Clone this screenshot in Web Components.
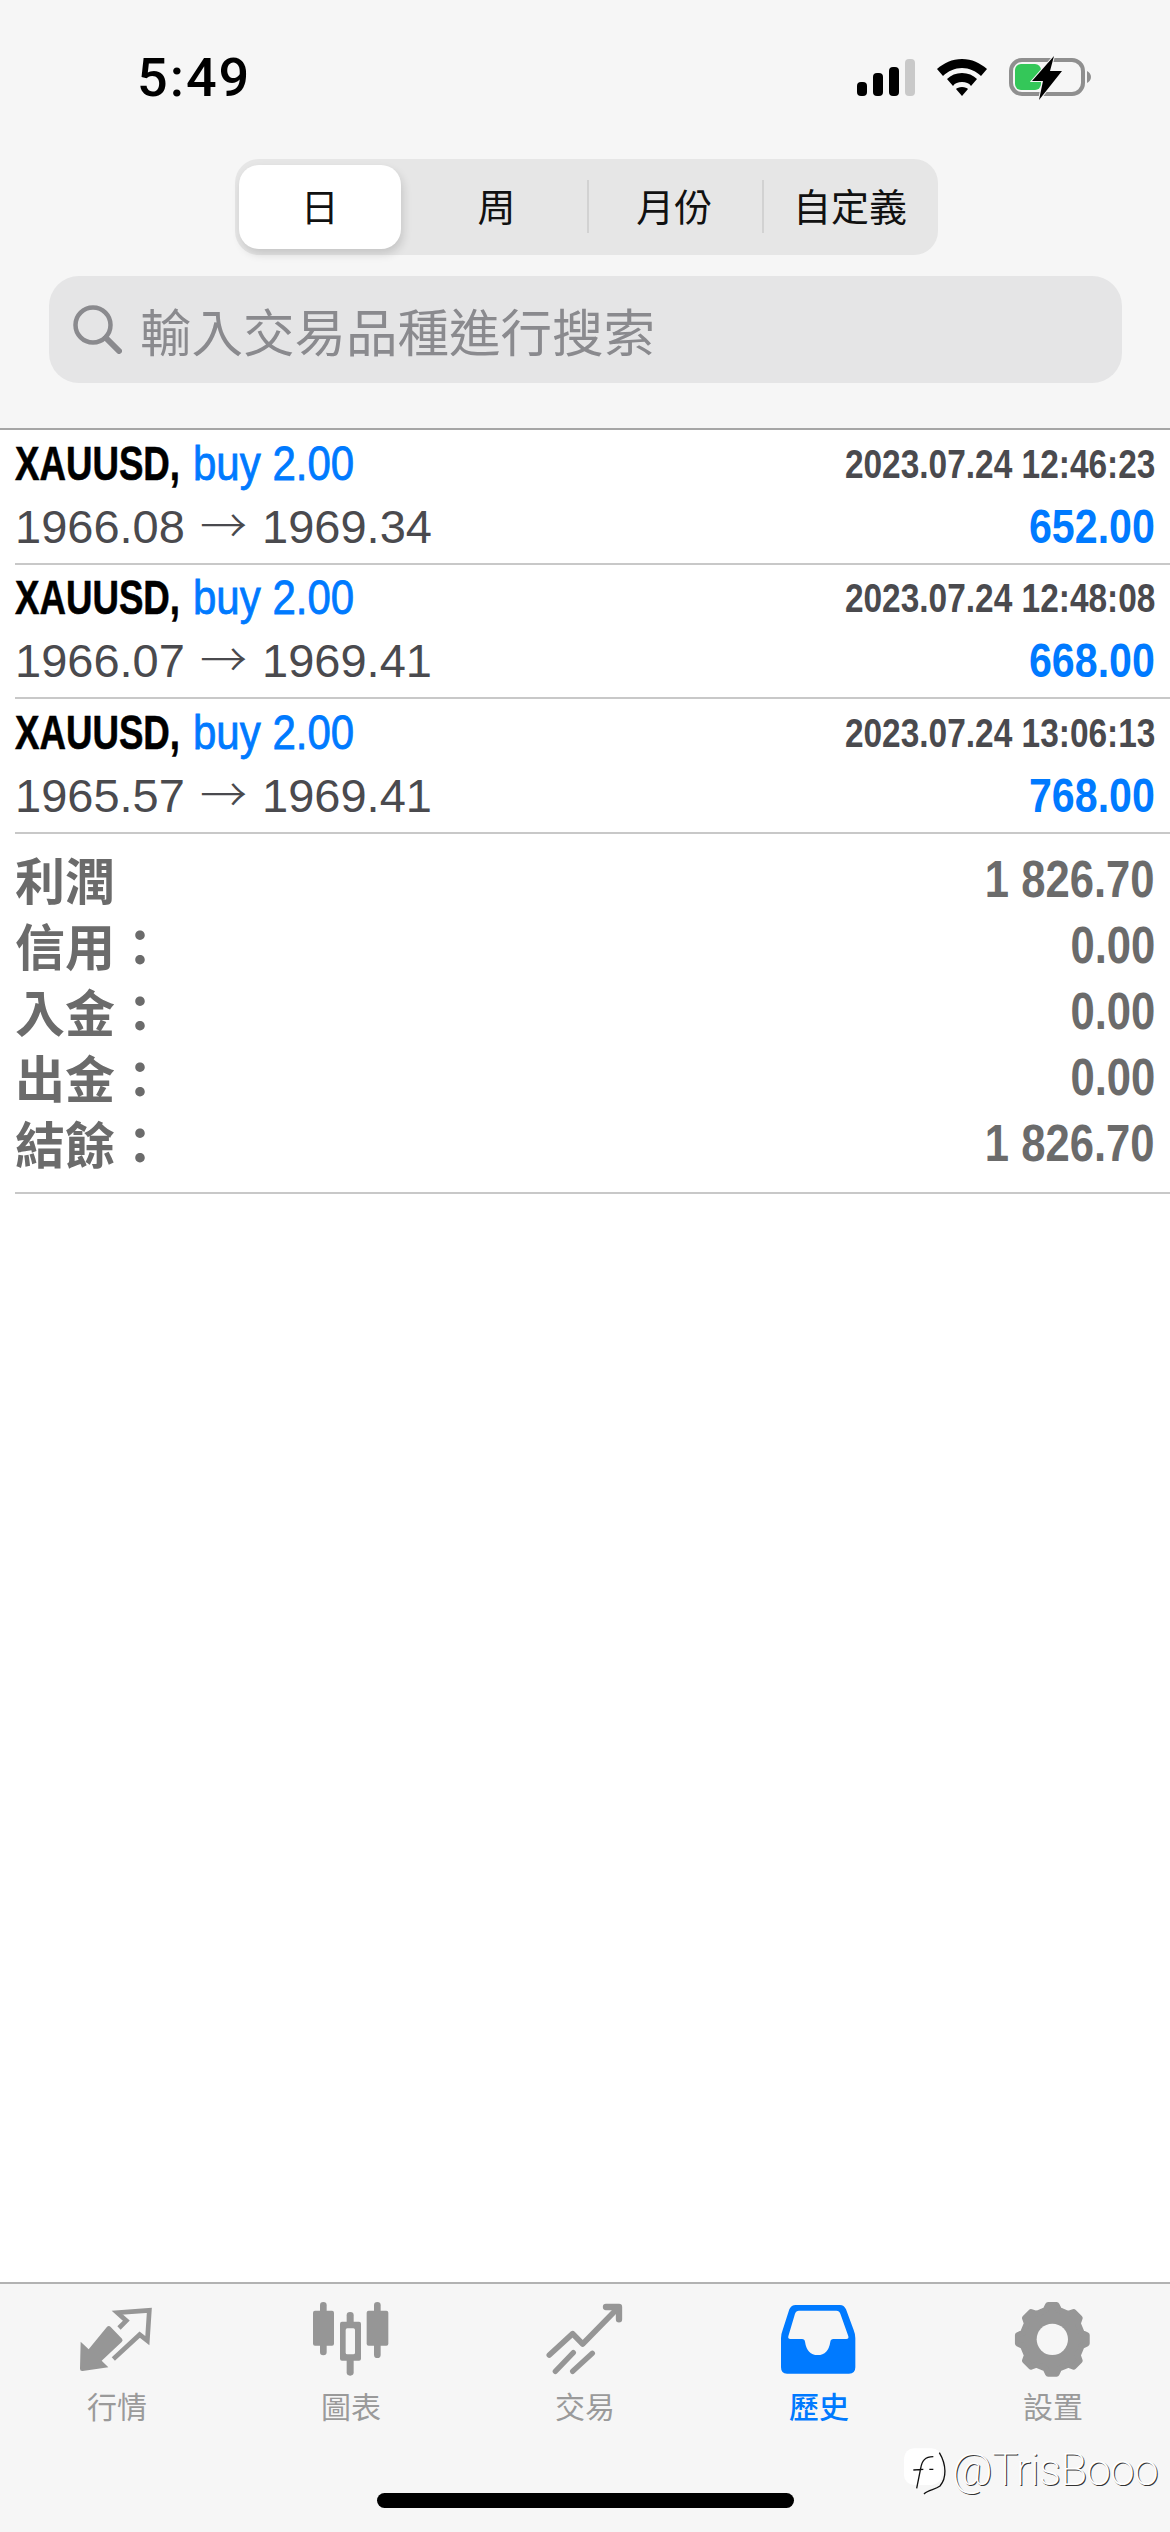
<!DOCTYPE html>
<html lang="zh-Hant">
<head>
<meta charset="utf-8">
<title>歷史</title>
<style>
html, body { margin: 0; padding: 0; background: #fff; }
body { width: 1170px; height: 2532px; font-family: "Liberation Sans", "Noto Sans CJK TC", sans-serif; }
mt-screen { height: 2532px; }
</style>
</head>
<body>
<mt-screen>
  <mt-header slot="top"></mt-header>
  <mt-deal symbol="XAUUSD," lots="buy 2.00" time="2023.07.24 12:46:23" open="1966.08" close="1969.34" profit="652.00"></mt-deal>
  <mt-deal symbol="XAUUSD," lots="buy 2.00" time="2023.07.24 12:48:08" open="1966.07" close="1969.41" profit="668.00"></mt-deal>
  <mt-deal symbol="XAUUSD," lots="buy 2.00" time="2023.07.24 13:06:13" open="1965.57" close="1969.41" profit="768.00"></mt-deal>
  <mt-summary>
    <mt-sumrow label="利潤" value="1 826.70"></mt-sumrow>
    <mt-sumrow label="信用：" value="0.00"></mt-sumrow>
    <mt-sumrow label="入金：" value="0.00"></mt-sumrow>
    <mt-sumrow label="出金：" value="0.00"></mt-sumrow>
    <mt-sumrow label="結餘：" value="1 826.70"></mt-sumrow>
  </mt-summary>
  <mt-tabbar slot="bottom"></mt-tabbar>
</mt-screen>
<script>
(function() {
	const SANS = '"Liberation Sans", "Noto Sans CJK TC", sans-serif';

	// small helper, every element here has a fixed shadow template
	function base(html) {
		return class extends HTMLElement {
			constructor() {
				super();
				this.attachShadow({mode: 'open'}).innerHTML = html;
			}
		};
	}

	customElements.define('mt-screen', base(`<style>
		:host { display: flex; flex-direction: column; width: 1170px; position: relative; }
		main { flex: 1; }
	</style><slot name="top"></slot><main><slot></slot></main><slot name="bottom"></slot>`));

	customElements.define('mt-header', base(`<style>
		:host { display: block; height: 430px; background: #f6f6f6; border-bottom: 2px solid #a6a6a6; box-sizing: border-box; font-family: ${SANS}; }
		.status { display: flex; justify-content: space-between; height: 159px; padding: 0 78px 0 137px; }
		.clock { font: 500 54px Roboto, sans-serif; letter-spacing: 2px; color: #000; line-height: 38px; margin-top: 59px; }
		.status svg { display: block; margin-top: 56px; }
		.seg { display: grid; grid-template-columns: repeat(4, 175.750px); width: 703px; height: 96px; margin: 0 0 0 235px; background: #e6e6e6; border-radius: 24px; }
		.seg div { position: relative; display: flex; align-items: center; justify-content: center; font-size: 38px; color: #111; padding-bottom: 5px; box-sizing: border-box; }
		.seg .on { background: #fff; border-radius: 20px; margin: 6px 10px 6px 4px; box-shadow: 2px 5px 10px rgba(0,0,0,.14); }
		.seg .wk { padding-right: 4px; }
		.seg .sep::before { content: ""; position: absolute; left: 0; top: 21px; height: 53px; width: 2px; background: #d2d2d2; }
		.search { display: flex; align-items: center; gap: 18px; height: 107px; margin: 21px 48px 0 49px; padding-left: 23px; background: #e5e5e6; border-radius: 30px; font-size: 51.500px; color: #8a8a8e; box-sizing: border-box; }
	</style>
	<div class="status">
		<div class="clock">5:49</div>
		<svg width="235" height="44" viewBox="0 0 235 44">
			<g fill="#000"><rect x="0" y="26" width="10" height="14" rx="4"/><rect x="16" y="17" width="10" height="23" rx="4"/><rect x="32" y="11" width="10" height="29" rx="4"/></g>
			<rect x="48" y="3" width="10" height="37" rx="4" fill="#c9c9c9"/>
			<g transform="translate(80,3)" fill="#000">
				<path d="M25 0C15 0 7 4 0 10l6 7c5-5 12-8 19-8s14 3 19 8l6-7C43 4 35 0 25 0z"/>
				<path d="M25 14c-6 0-11 2-15 6l6 7c2-3 5-4 9-4s7 1 9 4l6-7c-4-4-9-6-15-6z"/>
				<path d="M25 28c-3 0-5 1-6 2l6 7 6-7c-1-1-3-2-6-2z"/>
			</g>
			<rect x="154" y="4" width="72" height="34" rx="11" fill="none" stroke="#8f8f8f" stroke-width="4"/>
			<path d="M230 15c2 1 4 3 4 6s-2 5-4 6z" fill="#8f8f8f"/>
			<rect x="158" y="8" width="26" height="26" rx="6" fill="#34c759"/>
			<path d="M197 0 175 25H186L182 44 205 15H193z" fill="#000" stroke="#f6f6f6" stroke-width="2" paint-order="stroke"/>
		</svg>
	</div>
	<div class="seg">
		<div class="on">日</div><div class="wk">周</div><div class="sep">月份</div><div class="sep">自定義</div>
	</div>
	<div class="search">
		<svg width="50" height="50" viewBox="0 0 50 50" style="margin-top:-2px"><circle cx="21" cy="21" r="17.500" fill="none" stroke="#8a8a8e" stroke-width="4.500"/><path d="M34 34 47 47" stroke="#8a8a8e" stroke-width="6" stroke-linecap="round"/></svg>
		<span>輸入交易品種進行搜索</span>
	</div>`));

	customElements.define('mt-deal', class extends HTMLElement {
		connectedCallback() {
			if (this.shadowRoot) return;
			const a = n => this.getAttribute(n);
			this.attachShadow({mode: 'open'}).innerHTML = `<style>
			:host { display: block; height: 134.500px; box-sizing: border-box; padding-left: 15px; font-family: ${SANS}; }
			.in { height: 100%; box-sizing: border-box; border-bottom: 2px solid #c8c8c8; padding: 2px 15px 0 0; display: grid; grid-template-rows: 63px 62px; align-content: start; }
			.r { display: flex; justify-content: space-between; align-items: center; white-space: nowrap; line-height: 1; }
			.sym, .lot, .tm, .pf { display: inline-block; }
			.sym { font-weight: 700; font-size: 48px; color: #000; transform: scaleX(.764); transform-origin: left; -webkit-text-stroke: .6px #000; }
			.lot { font-size: 48px; color: #007aff; margin-left: -38px; transform: scaleX(.875); transform-origin: left; -webkit-text-stroke: .8px #007aff; }
			.tm { font-weight: 700; font-size: 40px; color: #4a4a4e; transform: scaleX(.836); transform-origin: right; }
			.px { font-size: 47px; color: #4a4a4e; }
			.ar { font-family: "Noto Sans CJK TC", sans-serif; font-weight: 300; margin: 0 2px; line-height: 0; }
			.pf { font-weight: 700; font-size: 49px; color: #007aff; transform: scaleX(.84); transform-origin: right; }
			</style>
			<div class="in">
				<div class="r"><span><span class="sym">${a('symbol')}</span><span class="lot">${a('lots')}</span></span><span class="tm">${a('time')}</span></div>
				<div class="r"><span class="px">${a('open')} <span class="ar">→</span> ${a('close')}</span><span class="pf">${a('profit')}</span></div>
			</div>`;
		}
	});

	customElements.define('mt-summary', base(`<style>
		:host { display: block; margin-left: 15px; height: 360px; box-sizing: border-box; border-bottom: 2px solid #c8c8c8; padding: 16px 15px 0 0; }
	</style><slot></slot>`));

	customElements.define('mt-sumrow', class extends HTMLElement {
		connectedCallback() {
			if (this.shadowRoot) return;
			this.attachShadow({mode: 'open'}).innerHTML = `<style>
			:host { display: flex; justify-content: space-between; align-items: center; height: 66px; color: #6b6b6b; font-family: ${SANS}; font-weight: 700; }
			.l { font-size: 50px; margin-bottom: 10px; }
			.v { display: inline-block; font-size: 51px; margin-bottom: 6px; transform: scaleX(.855); transform-origin: right; }
			</style><span class="l">${this.getAttribute('label')}</span><span class="v">${this.getAttribute('value')}</span>`;
		}
	});

	// gear teeth are easier to compute than to type out
	function gearPoints(cx, cy) {
		const pts = [];
		for (let i = 0; i < 8; i++) {
			const c = i * Math.PI / 4 - Math.PI / 2;
			[[90, -13], [104, -7], [104, 7], [90, 13]].forEach(([r, d]) => {
				const t = c + d * Math.PI / 180;
				pts.push((cx + r * Math.cos(t)).toFixed(1) + ',' + (cy + r * Math.sin(t)).toFixed(1));
			});
		}
		return pts.join(' ');
	}

	// all drawn on the 110x100 crop grid, at 3 units per px
	const GREY = '#969696';
	const ICONS = {
		quotes: `<svg width="110" height="100" viewBox="6 0 330 300">
			<path fill="${GREY}" d="M62 155 86 178 140 112Q146 105 152 111L186 146Q190 151 185 156L125 212 145 232 68 243Q60 244 60 236z"/>
			<path fill="none" stroke="${GREY}" stroke-width="14" stroke-miterlimit="6" d="M177 114 199 92 172 68 268 61 262 152 239 134 160 207"/>
		</svg>`,
		chart: `<svg width="110" height="100" viewBox="-12 0 330 300" fill="${GREY}">
			<rect x="60" y="36" width="20" height="160" rx="10"/><rect x="39" y="62" width="63" height="105" rx="6"/>
			<rect x="140" y="66" width="21" height="191" rx="10"/><rect x="120" y="95" width="63" height="117" rx="6"/>
			<rect x="137" y="115" width="28" height="78" rx="5" fill="#f6f6f6"/>
			<rect x="222" y="36" width="20" height="168" rx="10"/><rect x="200" y="62" width="65" height="105" rx="6"/>
		</svg>`,
		trade: `<svg width="110" height="100" viewBox="0 0 330 300" fill="none" stroke="${GREY}" stroke-linecap="round" stroke-linejoin="round">
			<path stroke-width="17" d="M58 195 128 131 158 162 260 58"/>
			<path stroke-width="19" d="M228 51H267V88"/>
			<path stroke-width="16" d="M76 244 130 188M128 244 187 190"/>
		</svg>`,
		history: `<svg width="110" height="100" viewBox="-3 0 330 300">
			<path fill="#007aff" d="M92 45H225Q237 45 243 58L266 120Q271 132 271 145V232Q271 251 252 251H66Q48 251 48 232V145Q48 132 53 120L73 58Q79 45 92 45z"/>
			<path fill="#f6f6f6" d="M102 62H214Q223 62 226 71L250 139Q252 147 244 147H205Q197 147 196 155 190 195 158 195 126 195 120 155 119 147 111 147H76Q68 147 70 139L90 71Q93 62 102 62z"/>
		</svg>`,
		settings: `<svg width="110" height="100" viewBox="-6 0 330 300">
			<polygon points="${gearPoints(157, 148)}" fill="${GREY}" stroke="${GREY}" stroke-width="18" stroke-linejoin="round"/>
			<circle cx="157" cy="148" r="47" fill="#f6f6f6"/>
		</svg>`
	};

	customElements.define('mt-tab', class extends HTMLElement {
		connectedCallback() {
			if (this.shadowRoot) return;
			const on = this.hasAttribute('active');
			this.attachShadow({mode: 'open'}).innerHTML = `<style>
			:host { display: flex; flex-direction: column; align-items: center; font-family: ${SANS}; }
			.ic { height: 100px; }
			.ic svg { display: block; }
			.t { font-size: 30px; line-height: 36px; color: ${on ? '#007aff' : '#9a9a9a'}; font-weight: ${on ? 500 : 400}; }
			</style><div class="ic">${ICONS[this.getAttribute('icon')]}</div><div class="t">${this.getAttribute('label')}</div>`;
		}
	});

	customElements.define('mt-tabbar', base(`<style>
		:host { display: block; position: relative; height: 250px; box-sizing: border-box; background: #f6f6f6; border-top: 2px solid #b2b2b2; }
		.tabs { display: grid; grid-template-columns: repeat(5, 1fr); padding-top: 6px; }
		.home { position: absolute; left: 377px; top: 209px; width: 417px; height: 15px; border-radius: 8px; background: #000; }
		.mark { position: absolute; left: 900px; top: 156px; height: 60px; display: flex; align-items: center; gap: 2px; font: 200 44px Roboto, sans-serif; color: #fff; letter-spacing: -.6px; text-shadow: 1px .5px 0 #333; }
		.mark svg { display: block; }
	</style>
	<div class="tabs">
		<mt-tab icon="quotes" label="行情"></mt-tab>
		<mt-tab icon="chart" label="圖表"></mt-tab>
		<mt-tab icon="trade" label="交易"></mt-tab>
		<mt-tab icon="history" label="歷史" active></mt-tab>
		<mt-tab icon="settings" label="設置"></mt-tab>
	</div>
	<div class="mark">
		<svg width="50" height="60" viewBox="0 0 150 180"><rect x="12" y="25" width="113" height="110" rx="30" fill="#fff"/><path d="M100 50C75 50 66 62 62 85L50 145M40 90 70 88M88 88 100 88M118 38C140 75 140 115 120 138 105 150 85 148 72 162" fill="none" stroke="#111" stroke-width="4"/></svg>
		<span>@TrisBooo</span>
	</div>
	<div class="home"></div>`));
})();
</script>
</body>
</html>
